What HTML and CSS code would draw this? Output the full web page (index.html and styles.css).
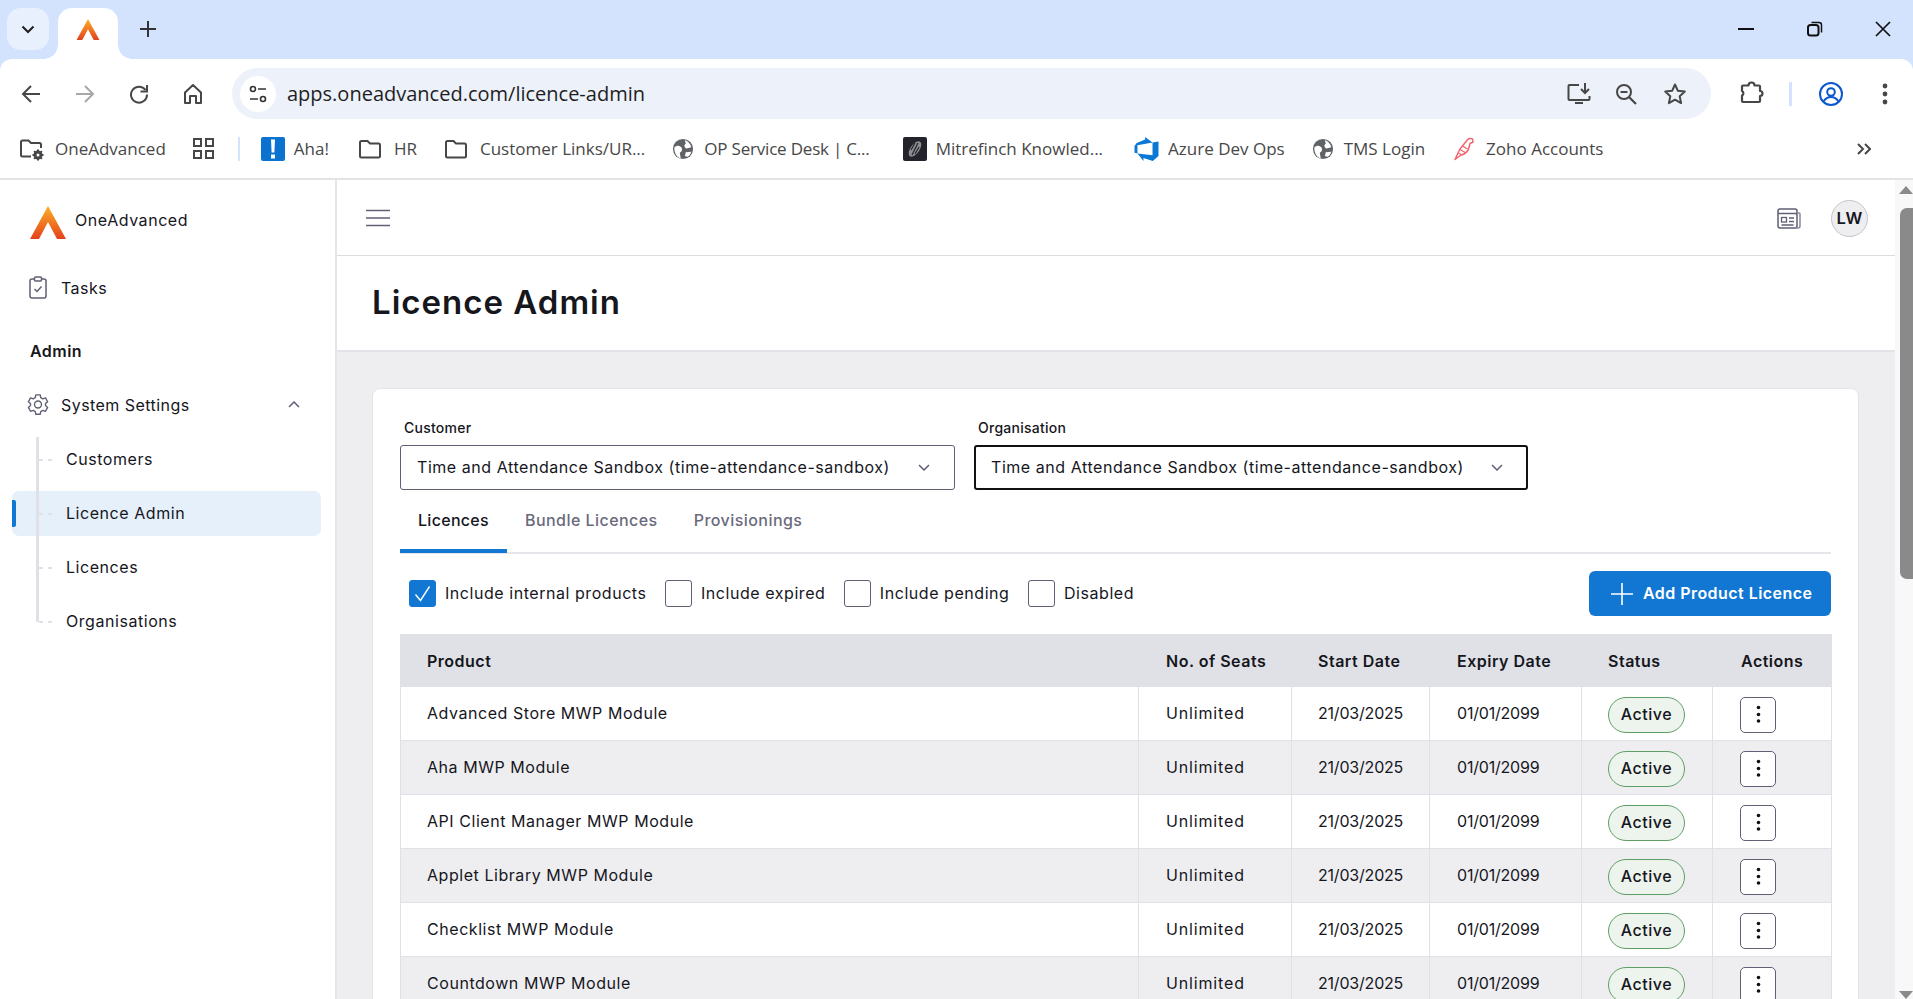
FILE: index.html
```html
<!DOCTYPE html>
<html lang="en">
<head>
    <meta charset="UTF-8">
    <meta name="viewport" content="width=device-width, initial-scale=1.0">
    <title>Licence Admin - OneAdvanced</title>
    <link rel="stylesheet" href="styles.css">
</head>
<body>
    <svg class="defs" width="0" height="0" aria-hidden="true">
        <defs>
            <linearGradient id="flame" x1="0" y1="0" x2="0" y2="1">
                <stop offset="0" stop-color="#fbb02a"/>
                <stop offset="1" stop-color="#e4421a"/>
            </linearGradient>
            <symbol id="folder" viewBox="0 0 24 24">
                <path d="M2 5.5A1.5 1.5 0 0 1 3.500 4h6l2.500 2.500h8.500A1.500 1.500 0 0 1 22 8v11a1.500 1.500 0 0 1-1.500 1.500h-17A1.500 1.500 0 0 1 2 19z" fill="none" stroke="#474747" stroke-width="2"/>
            </symbol>
            <symbol id="globe" viewBox="0 0 24 24">
                <circle cx="12" cy="12" r="11" fill="#5f6368"/>
                <path d="M2.500 10.500c2-2.500 5-2.500 7-1 2 1.500 1.500 3.500 1 5l-2 1.500 1 6C5 21 2.500 16 2.500 10.500zM14 2.500c3 .5 6 3.500 7 7.500l-5 1.500c-1.500 0-2.500-2-2.500-3.500l1.500-2zM15 15.500l6-.500c-.5 2.500-2 4.500-4 5.500l-3-1z" fill="#fff"/>
            </symbol>
            <symbol id="kebab" viewBox="0 0 36 36">
                <circle cx="18.500" cy="10.500" r="1.800" fill="#111"/>
                <circle cx="18.500" cy="17.500" r="1.800" fill="#111"/>
                <circle cx="18.500" cy="24" r="1.800" fill="#111"/>
            </symbol>
        </defs>
    </svg>

    <div class="tabstrip">
        <button class="tab-search">
            <svg width="14" height="9" viewBox="0 0 14 9"><path d="M1.500 1.500 7 7l5.500-5.500" fill="none" stroke="#1f1f1f" stroke-width="2"/></svg>
        </button>
        <div class="tab">
            <svg width="24" height="21" viewBox="0 0 36 33"><path d="M18 0 36 33h-9L18 16 9 33H0z" fill="url(#flame)"/></svg>
        </div>
        <svg class="new-tab" width="18" height="18" viewBox="0 0 18 18"><path d="M9 1v16M1 9h16" stroke="#333" stroke-width="2"/></svg>
        <div class="window-controls">
            <svg width="16" height="16" viewBox="0 0 16 16"><path d="M0 8h16" stroke="#111" stroke-width="2"/></svg>
            <svg width="16" height="16" viewBox="0 0 16 16"><rect x="1" y="4" width="10.500" height="10.500" rx="2.500" fill="none" stroke="#111" stroke-width="2"/><path d="M4.500 1.500H12a2.500 2.500 0 0 1 2.500 2.500v7.500" fill="none" stroke="#111" stroke-width="1.500"/></svg>
            <svg width="16" height="16" viewBox="0 0 16 16"><path d="M1 1l14 14M15 1 1 15" stroke="#111" stroke-width="1.700"/></svg>
        </div>
    </div>

    <div class="toolbar">
        <button class="tool-btn">
            <svg width="20" height="20" viewBox="0 0 20 20"><path d="M19 10H2M10 2l-8 8 8 8" fill="none" stroke="#474747" stroke-width="2"/></svg>
        </button>
        <button class="tool-btn">
            <svg width="20" height="20" viewBox="0 0 20 20"><path d="M1 10h17M10 2l8 8-8 8" fill="none" stroke="#a8a8a8" stroke-width="2"/></svg>
        </button>
        <button class="tool-btn">
            <svg width="20" height="20" viewBox="0 0 20 20"><path d="M16.500 6A8 8 0 1 0 18 10.500" fill="none" stroke="#474747" stroke-width="2"/><path d="M18 1v6.500h-6.500" fill="none" stroke="#474747" stroke-width="2"/></svg>
        </button>
        <button class="tool-btn">
            <svg width="20" height="22" viewBox="0 0 20 22"><path d="M2 9.500 10 2l8 7.500V20h-5v-7H7v7H2z" fill="none" stroke="#474747" stroke-width="2" stroke-linejoin="round"/></svg>
        </button>
        <div class="omnibox">
            <span class="site-info">
                <svg width="18" height="18" viewBox="0 0 18 18"><circle cx="4" cy="4" r="2.500" fill="none" stroke="#333" stroke-width="1.600"/><path d="M9 4h8M1 14h8" stroke="#333" stroke-width="1.600"/><circle cx="14" cy="14" r="2.500" fill="none" stroke="#333" stroke-width="1.600"/></svg>
            </span>
            <span class="url">apps.oneadvanced.com/licence-admin</span>
            <span class="omni-icons">
                <svg class="install" width="24" height="24" viewBox="0 0 24 24"><path d="M12 3H2.500a1 1 0 0 0-1 1v13a1 1 0 0 0 1 1h19a1 1 0 0 0 1-1v-3" fill="none" stroke="#474747" stroke-width="2"/><path d="M8 20h8v2H8z" fill="#474747"/><path d="M18 1v9M14 7l4 4 4-4" fill="none" stroke="#474747" stroke-width="2"/></svg>
                <svg width="22" height="22" viewBox="0 0 22 22"><circle cx="9" cy="9" r="7" fill="none" stroke="#474747" stroke-width="2"/><path d="M14 14l7 7" stroke="#474747" stroke-width="2.200"/><path d="M5.500 9h7" stroke="#474747" stroke-width="2"/></svg>
                <svg width="24" height="24" viewBox="0 0 24 24"><path d="M12 2.500l2.900 6.300 6.900.8-5.100 4.700 1.400 6.800-6.100-3.400-6.100 3.400 1.400-6.800-5.100-4.700 6.900-.8z" fill="none" stroke="#474747" stroke-width="2" stroke-linejoin="round"/></svg>
            </span>
        </div>
        <svg class="extensions" width="25" height="25" viewBox="0 0 25 25"><path d="M2 5.500a1 1 0 0 1 1-1h5.500a3 3 0 0 1 6 0H19a1 1 0 0 1 1 1V10a2.500 2.500 0 0 1 0 5v5a1 1 0 0 1-1 1H3a1 1 0 0 1-1-1v-5.500a2.500 2.500 0 0 0 0-4.500z" fill="none" stroke="#474747" stroke-width="2.200" stroke-linejoin="round"/></svg>
        <span class="tool-sep"></span>
        <svg class="profile" width="24" height="24" viewBox="0 0 24 24"><circle cx="12" cy="12" r="11" fill="none" stroke="#0b57d0" stroke-width="2"/><circle cx="12" cy="10" r="3.800" fill="none" stroke="#0b57d0" stroke-width="2"/><path d="M4.500 19.500c2-3.200 4.500-4.500 7.500-4.500s5.500 1.300 7.500 4.500" fill="none" stroke="#0b57d0" stroke-width="2"/></svg>
        <svg class="menu" width="6" height="22" viewBox="0 0 6 22"><circle cx="3" cy="3" r="2.400" fill="#474747"/><circle cx="3" cy="11" r="2.400" fill="#474747"/><circle cx="3" cy="19" r="2.400" fill="#474747"/></svg>
    </div>

    <div class="bookmarks">
        <a class="bookmark bm-managed">
            <svg width="26" height="24" viewBox="0 0 26 24"><path d="M12 19.500H3.500A1.500 1.500 0 0 1 2 18V5A1.500 1.500 0 0 1 3.500 3.500h6L12 6h8.500A1.500 1.500 0 0 1 22 7.500V11" fill="none" stroke="#474747" stroke-width="2"/><circle cx="19" cy="18" r="3" fill="none" stroke="#474747" stroke-width="3"/><path d="M19 12.500v11M13.500 18h11M15.100 14.100l7.800 7.800M15.100 21.900l7.800-7.800" stroke="#474747" stroke-width="2"/><circle cx="19" cy="18" r="1.500" fill="#fff"/></svg>
            <span>OneAdvanced</span>
        </a>
        <svg class="apps" width="21" height="21" viewBox="0 0 21 21"><path d="M1 1h7v7H1zM13 1h7v7h-7zM1 13h7v7H1zM13 13h7v7h-7z" fill="none" stroke="#474747" stroke-width="2"/></svg>
        <span class="bm-sep"></span>
        <a class="bookmark bm-aha">
            <svg width="24" height="24" viewBox="0 0 24 24"><rect width="24" height="24" rx="2" fill="#0b73cf"/><path d="M10 2.500h4l-.6 13h-2.800z" fill="#fff"/><rect x="10" y="17.500" width="4" height="4" fill="#fff"/></svg>
            <span>Aha!</span>
        </a>
        <a class="bookmark bm-folder bm-hr"><svg width="24" height="24"><use href="#folder"/></svg><span>HR</span></a>
        <a class="bookmark bm-folder bm-links"><svg width="24" height="24"><use href="#folder"/></svg><span>Customer Links/UR...</span></a>
        <a class="bookmark bm-desk"><svg width="22" height="22"><use href="#globe"/></svg><span>OP Service Desk | C...</span></a>
        <a class="bookmark bm-mitre">
            <svg width="24" height="24" viewBox="0 0 24 24"><rect width="24" height="24" rx="2" fill="#23232b"/><ellipse cx="12" cy="12" rx="4.500" ry="9" transform="rotate(35 12 12)" fill="#8d8d92"/><path d="M15 6l-6 12M12 6l-4 7M16 10l-4 7" stroke="#23232b" stroke-width="1.200"/></svg>
            <span>Mitrefinch Knowled...</span>
        </a>
        <a class="bookmark bm-azure">
            <svg width="25" height="24" viewBox="0 0 24 24"><path d="M0 8.877L2.247 5.910l8.405-3.416V.022l7.370 5.393L2.966 8.338v8.225L0 15.707zm24-4.450v14.651l-5.753 4.900-9.303-3.057v3.056l-5.978-7.416 15.057 1.798V5.415z" fill="#0a78d4"/></svg>
            <span>Azure Dev Ops</span>
        </a>
        <a class="bookmark bm-tms"><svg width="22" height="22"><use href="#globe"/></svg><span>TMS Login</span></a>
        <a class="bookmark bm-folder bm-zoho">
            <svg width="20" height="24" viewBox="0 0 20 24"><path d="M18.500 2c-2.500-1.500-5 0-6 2L6 12l-2 4-3 6.500 6-4.500c4-1 7-3.500 8-7.500l1-4 3-1.500z" fill="#fff" stroke="#f2666c" stroke-width="1.500" stroke-linejoin="round"/><path d="M6 12.500l6 3.500M8.500 9l5 3M4 16l4.500 2" stroke="#f2666c" stroke-width="1.300"/></svg>
            <span>Zoho Accounts</span>
        </a>
        <svg class="bm-more" width="14" height="12" viewBox="0 0 14 12"><path d="M1 1l5 5-5 5M8 1l5 5-5 5" fill="none" stroke="#474747" stroke-width="2"/></svg>
    </div>

    <div class="app">
        <aside class="sidebar">
            <div class="brand">
                <svg width="36" height="33" viewBox="0 0 36 33"><path d="M18 0 36 33h-9L18 16 9 33H0z" fill="url(#flame)"/></svg>
                <span>OneAdvanced</span>
            </div>
            <a class="nav-item nav-tasks">
                <svg width="18" height="23" viewBox="0 0 18 23"><rect x="1" y="3" width="16" height="19" rx="2" fill="none" stroke="#5f5f75" stroke-width="1.500"/><rect x="5.500" y="1" width="7" height="4" rx="1" fill="#fff" stroke="#5f5f75" stroke-width="1.500"/><path d="M5.500 13l2.500 2.500 4.500-5" fill="none" stroke="#5f5f75" stroke-width="1.500"/></svg>
                <span>Tasks</span>
            </a>
            <div class="nav-heading">Admin</div>
            <a class="nav-item nav-settings">
                <svg width="22" height="23" viewBox="0 0 24 24"><path d="M9.600 1.500h4.800l.6 3 2.200 1.300 3-1 2.300 4.200-2.300 2v2.200l2.300 2-2.300 4.200-3-1-2.200 1.300-.6 3H9.600l-.6-3-2.200-1.300-3 1-2.300-4.200 2.300-2v-2.200l-2.300-2 2.300-4.200 3 1L9 4.500z" fill="none" stroke="#5f5f75" stroke-width="1.500" stroke-linejoin="round"/><circle cx="12" cy="12" r="3.800" fill="none" stroke="#5f5f75" stroke-width="1.500"/></svg>
                <span>System Settings</span>
                <svg class="nav-chevron" width="12" height="7" viewBox="0 0 12 7"><path d="M1 6l5-5 5 5" fill="none" stroke="#5f5f75" stroke-width="1.500"/></svg>
            </a>
            <div class="subnav">
                <a class="sub-item">Customers</a>
                <a class="sub-item active">Licence Admin</a>
                <a class="sub-item">Licences</a>
                <a class="sub-item">Organisations</a>
            </div>
        </aside>

        <main class="main">
            <div class="topbar">
                <svg width="24" height="18" viewBox="0 0 24 18"><path d="M0 1.500h24M0 9h24M0 16.500h24" stroke="#5f5f75" stroke-width="1.600"/></svg>
                <div class="topbar-right">
                    <svg width="24" height="21" viewBox="0 0 24 21"><rect x="1" y="1" width="19" height="19" rx="2" fill="none" stroke="#5f5f75" stroke-width="1.500"/><path d="M20 5h2a1 1 0 0 1 1 1v12a2 2 0 0 1-2 2h-3" fill="none" stroke="#8a8a9c" stroke-width="1.500"/><path d="M1 5.500h19" stroke="#5f5f75" stroke-width="1.500"/><rect x="4.500" y="9.500" width="5" height="4.500" fill="none" stroke="#5f5f75" stroke-width="1.300"/><path d="M12 10h5M12 13.500h5M4.500 17h12" stroke="#5f5f75" stroke-width="1.300"/></svg>
                    <span class="avatar">LW</span>
                </div>
            </div>
            <div class="page-title">
                <h1>Licence Admin</h1>
            </div>
            <div class="page-body">
                <section class="card">
                    <div class="selects">
                        <div class="field">
                            <label>Customer</label>
                            <div class="select">
                                <span>Time and Attendance Sandbox (time-attendance-sandbox)</span>
                                <svg width="12" height="7" viewBox="0 0 12 7"><path d="M1 1l5 5 5-5" fill="none" stroke="#5f5f75" stroke-width="1.500"/></svg>
                            </div>
                        </div>
                        <div class="field">
                            <label>Organisation</label>
                            <div class="select focused">
                                <span>Time and Attendance Sandbox (time-attendance-sandbox)</span>
                                <svg width="12" height="7" viewBox="0 0 12 7"><path d="M1 1l5 5 5-5" fill="none" stroke="#5f5f75" stroke-width="1.500"/></svg>
                            </div>
                        </div>
                    </div>

                    <div class="tabs">
                        <a class="tab-link active">Licences</a>
                        <a class="tab-link">Bundle Licences</a>
                        <a class="tab-link">Provisionings</a>
                    </div>

                    <div class="filters">
                        <label class="check">
                            <span class="box checked">
                                <svg width="19" height="19" viewBox="0 0 19 19"><path d="M2.500 10.500l5 6 9-14" fill="none" stroke="#fff" stroke-width="1.400"/></svg>
                            </span>
                            <span class="check-text">Include internal products</span>
                        </label>
                        <label class="check"><span class="box"></span><span class="check-text">Include expired</span></label>
                        <label class="check"><span class="box"></span><span class="check-text">Include pending</span></label>
                        <label class="check"><span class="box"></span><span class="check-text">Disabled</span></label>
                        <button class="add-btn">
                            <svg width="22" height="22" viewBox="0 0 22 22"><path d="M11 0v22M0 11h22" stroke="#fff" stroke-width="1.600"/></svg>
                            Add Product Licence
                        </button>
                    </div>

                    <table class="licences">
                        <colgroup>
                            <col class="col-product">
                            <col class="col-seats">
                            <col class="col-start">
                            <col class="col-expiry">
                            <col class="col-status">
                            <col class="col-actions">
                        </colgroup>
                        <thead>
                            <tr>
                                <th>Product</th>
                                <th>No. of Seats</th>
                                <th>Start Date</th>
                                <th>Expiry Date</th>
                                <th>Status</th>
                                <th>Actions</th>
                            </tr>
                        </thead>
                        <tbody>
                            <tr>
                                <td>Advanced Store MWP Module</td>
                                <td>Unlimited</td>
                                <td>21/03/2025</td>
                                <td>01/01/2099</td>
                                <td><span class="badge">Active</span></td>
                                <td><button class="row-btn"><svg width="36" height="36"><use href="#kebab"/></svg></button></td>
                            </tr>
                            <tr>
                                <td>Aha MWP Module</td>
                                <td>Unlimited</td>
                                <td>21/03/2025</td>
                                <td>01/01/2099</td>
                                <td><span class="badge">Active</span></td>
                                <td><button class="row-btn"><svg width="36" height="36"><use href="#kebab"/></svg></button></td>
                            </tr>
                            <tr>
                                <td>API Client Manager MWP Module</td>
                                <td>Unlimited</td>
                                <td>21/03/2025</td>
                                <td>01/01/2099</td>
                                <td><span class="badge">Active</span></td>
                                <td><button class="row-btn"><svg width="36" height="36"><use href="#kebab"/></svg></button></td>
                            </tr>
                            <tr>
                                <td>Applet Library MWP Module</td>
                                <td>Unlimited</td>
                                <td>21/03/2025</td>
                                <td>01/01/2099</td>
                                <td><span class="badge">Active</span></td>
                                <td><button class="row-btn"><svg width="36" height="36"><use href="#kebab"/></svg></button></td>
                            </tr>
                            <tr>
                                <td>Checklist MWP Module</td>
                                <td>Unlimited</td>
                                <td>21/03/2025</td>
                                <td>01/01/2099</td>
                                <td><span class="badge">Active</span></td>
                                <td><button class="row-btn"><svg width="36" height="36"><use href="#kebab"/></svg></button></td>
                            </tr>
                            <tr>
                                <td>Countdown MWP Module</td>
                                <td>Unlimited</td>
                                <td>21/03/2025</td>
                                <td>01/01/2099</td>
                                <td><span class="badge">Active</span></td>
                                <td><button class="row-btn"><svg width="36" height="36"><use href="#kebab"/></svg></button></td>
                            </tr>
                        </tbody>
                    </table>
                </section>
            </div>
        </main>

        <div class="scrollbar">
            <svg width="14" height="8" viewBox="0 0 14 8"><path d="M7 0l7 8H0z" fill="#8a8a8a"/></svg>
            <div class="scroll-thumb"></div>
            <svg class="scroll-down" width="14" height="8" viewBox="0 0 14 8"><path d="M0 0h14L7 8z" fill="#8a8a8a"/></svg>
        </div>
    </div>
</body>
</html>
```

FILE: styles.css
```css
* {
    margin: 0;
    padding: 0;
    box-sizing: border-box;
}

html, body {
    height: 999px;
    overflow: hidden;
}

body {
    font-family: "Inter", sans-serif;
    color: #16161d;
    background: #fff;
}

.defs {
    position: absolute;
}

svg {
    display: block;
    flex-shrink: 0;
}

button {
    background: none;
    border: none;
    font-family: inherit;
}

/* Browser chrome */
.tabstrip {
    height: 71px;
    margin-bottom: -12px;
    background: #d3e3fd;
    display: flex;
    align-items: flex-start;
    padding: 8px 22px 0 7px;
}

.tab-search {
    width: 42px;
    height: 42px;
    background: #e9f0fd;
    border-radius: 14px;
    display: flex;
    align-items: center;
    justify-content: center;
}

.tab {
    position: relative;
    width: 60px;
    height: 51px;
    margin-left: 9px;
    background: #fff;
    border-radius: 14px 14px 0 0;
    display: flex;
    align-items: center;
    justify-content: center;
    padding-bottom: 9px;
}

.tab::before,
.tab::after {
    content: "";
    position: absolute;
    bottom: 0;
    width: 14px;
    height: 14px;
}

.tab::before {
    left: -14px;
    background: radial-gradient(circle at 0 0, transparent 13.500px, #fff 14px);
}

.tab::after {
    right: -14px;
    background: radial-gradient(circle at 100% 0, transparent 13.500px, #fff 14px);
}

.new-tab {
    margin: 12px 0 0 21px;
}

.window-controls {
    margin-left: auto;
    display: flex;
    gap: 53px;
    padding-top: 13px;
}

.window-controls svg:last-child {
    margin-left: -1px;
}

.toolbar {
    position: relative;
    height: 60px;
    background: #fff;
    border-radius: 12px 12px 0 0;
    display: flex;
    align-items: center;
    padding: 9px 0 0 4px;
}

.tool-btn {
    width: 54px;
    display: flex;
    justify-content: center;
}

.omnibox {
    width: 1479px;
    height: 51px;
    margin-left: 12px;
    background: #ecf1fa;
    border-radius: 26px;
    display: flex;
    align-items: center;
    padding: 0 24px 0 8px;
}

.site-info {
    width: 36px;
    height: 36px;
    background: #fff;
    border-radius: 50%;
    display: flex;
    align-items: center;
    justify-content: center;
}

.url {
    margin-left: 11px;
    font-family: "Open Sans", sans-serif;
    font-size: 20px;
    color: #1f1f1f;
}

.omni-icons {
    margin-left: auto;
    display: flex;
    align-items: center;
    gap: 26px;
}

.install {
    margin-right: -2px;
}

.extensions {
    margin-left: 29px;
}

.tool-sep {
    width: 3px;
    height: 24px;
    margin-left: 24px;
    background: #d3e3fd;
}

.profile {
    margin-left: 27px;
}

.menu {
    margin-left: 39px;
}

.bookmarks {
    height: 61px;
    border-bottom: 2px solid #e3e3e3;
    display: flex;
    align-items: center;
    padding-left: 19px;
    font-family: "Open Sans", sans-serif;
    font-size: 17px;
    color: #474747;
}

.bookmark {
    display: flex;
    align-items: center;
    gap: 10px;
    white-space: nowrap;
}

.bm-folder { gap: 12px; }

.apps { margin-left: 27px; }

.bm-sep {
    width: 2px;
    height: 24px;
    margin-left: 24px;
    background: #d3e3fd;
}

.bm-aha { margin-left: 21px; gap: 9px; }
.bm-hr { margin-left: 29px; }
.bm-links { margin-left: 27px; }
.bm-desk { margin-left: 27px; }
.bm-desk span { letter-spacing: -0.2px; }
.bm-mitre { margin-left: 33px; gap: 9px; }
.bm-azure { margin-left: 31px; gap: 9px; }
.bm-tms { margin-left: 27px; }
.bm-zoho { margin-left: 29px; }

.bm-more {
    margin-left: auto;
    margin-right: 42px;
}

/* App shell */
.app {
    height: 819px;
    display: flex;
}

.sidebar {
    width: 337px;
    flex-shrink: 0;
    border-right: 2px solid #e6e6ea;
    padding: 20px 14px 0 12px;
}

.brand {
    height: 40px;
    padding-left: 18px;
    margin-bottom: 26px;
    display: flex;
    align-items: center;
    gap: 9px;
    font-size: 16px;
    letter-spacing: 0.55px;
}

.brand svg {
    margin-top: 5px;
}

.nav-item {
    height: 45px;
    padding-bottom: 2px;
    display: flex;
    align-items: center;
    font-size: 16px;
    letter-spacing: 0.45px;
}

.nav-tasks {
    padding-left: 17px;
    gap: 14px;
}

.nav-settings {
    padding-left: 15px;
    gap: 12px;
    margin-bottom: 9px;
}

.nav-chevron {
    margin-left: auto;
    margin-right: 21px;
}

.nav-heading {
    height: 45px;
    margin: 18px 0 9px;
    padding-left: 18px;
    line-height: 45px;
    font-size: 16px;
    font-weight: 600;
    letter-spacing: 0.45px;
}

.subnav {
    position: relative;
}

.subnav::before {
    content: "";
    position: absolute;
    left: 24px;
    top: 0;
    width: 3px;
    height: 185px;
    background: #e0e1e6;
    z-index: 1;
}

.sub-item {
    position: relative;
    height: 45px;
    margin-bottom: 9px;
    padding: 0 0 2px 54px;
    display: flex;
    align-items: center;
    border-radius: 7px;
    font-size: 16px;
    letter-spacing: 0.55px;
}

.sub-item::before {
    content: "";
    position: absolute;
    left: 27px;
    top: 22px;
    width: 13px;
    height: 2px;
    background: repeating-linear-gradient(90deg, #e0e1e6 0 4px, transparent 4px 9px);
}

.sub-item.active {
    background: #e6f0fa;
}

.sub-item.active::after {
    content: "";
    position: absolute;
    left: 0;
    top: 9px;
    width: 4px;
    height: 27px;
    background: #1177d3;
    border-radius: 0 2px 2px 0;
}

.main {
    flex: 1;
    min-width: 0;
    display: flex;
    flex-direction: column;
}

.topbar {
    height: 76px;
    flex-shrink: 0;
    border-bottom: 1px solid #dcdce2;
    display: flex;
    align-items: center;
    justify-content: space-between;
    padding: 1px 27px 0 29px;
}

.topbar-right {
    display: flex;
    align-items: center;
    gap: 30px;
}

.avatar {
    width: 37px;
    height: 37px;
    border: 1px solid #c4c4cd;
    border-radius: 50%;
    background: #eeeef1;
    display: flex;
    align-items: center;
    justify-content: center;
    font-size: 16.500px;
    font-weight: 600;
}

.page-title {
    height: 96px;
    flex-shrink: 0;
    border-bottom: 2px solid #e3e3e7;
    padding: 0 0 3px 35px;
    display: flex;
    align-items: center;
}

h1 {
    font-size: 33px;
    font-weight: 600;
    letter-spacing: 1px;
}

.page-body {
    flex: 1;
    min-height: 0;
    overflow: hidden;
    background: #eeeef1;
    padding: 36px 36px 0 35px;
}

.card {
    background: #fff;
    border: 1px solid #e4e4e8;
    border-radius: 8px;
    padding: 30px 27px 20px;
}

/* Form */
.selects {
    display: flex;
    gap: 19px;
}

.field {
    width: 555px;
}

.field:last-child {
    width: 554px;
}

.field label {
    display: block;
    height: 18px;
    margin: 0 0 8px 4px;
    line-height: 18px;
    font-size: 14px;
    font-weight: 500;
    letter-spacing: 0.25px;
}

.select {
    height: 45px;
    border: 1px solid #5f5f75;
    border-radius: 3px;
    display: flex;
    align-items: center;
    justify-content: space-between;
    padding: 0 24px 2px 16px;
    font-size: 16px;
    letter-spacing: 0.55px;
    white-space: nowrap;
}

.select svg {
    margin-top: 2px;
}

.select.focused {
    border: 2px solid #111;
    padding: 0 23px 2px 15px;
}

.tabs {
    display: flex;
    margin-top: 9px;
    border-bottom: 2px solid #e6e6ea;
}

.tab-link {
    padding: 10px 18px 18px;
    line-height: 22px;
    font-size: 16px;
    font-weight: 500;
    letter-spacing: 0.45px;
    color: #6a6a7c;
    border-bottom: 4px solid transparent;
    margin-bottom: -1px;
}

.tab-link.active {
    color: #16161d;
    letter-spacing: 0.3px;
    border-bottom-color: #1177d3;
}

.filters {
    display: flex;
    align-items: center;
    margin-top: 17px;
    padding-left: 9px;
    gap: 18.500px;
    font-size: 16px;
    letter-spacing: 0.55px;
}

.check {
    display: flex;
    align-items: center;
    gap: 9px;
}

.check-text {
    margin-bottom: 2px;
}

.box {
    width: 27px;
    height: 27px;
    border: 1px solid #5f5f75;
    border-radius: 3px;
    display: flex;
    align-items: center;
    justify-content: center;
}

.box.checked {
    background: #1177d3;
    border-color: #1177d3;
}

.add-btn {
    margin-left: auto;
    height: 45px;
    width: 242px;
    background: #1177d3;
    border-radius: 6px;
    display: flex;
    align-items: center;
    gap: 10px;
    padding: 0 0 2px 22px;
    color: #fff;
    font-size: 16px;
    font-weight: 600;
    letter-spacing: 0.45px;
}

.add-btn svg {
    margin-top: 2px;
}

/* Table */
.licences {
    width: 1431px;
    margin-top: 18px;
    border-collapse: collapse;
    table-layout: fixed;
    font-size: 16px;
    letter-spacing: 0.55px;
}

.col-product { width: 738px; }
.col-seats { width: 153px; }
.col-start { width: 138px; }
.col-expiry { width: 152px; }
.col-status { width: 131px; }
.col-actions { width: 119px; }

.licences th,
.licences td {
    height: 54px;
    padding: 0 26px;
    text-align: left;
    white-space: nowrap;
    border: 1px solid #e0e1e6;
}

.licences th {
    height: 52px;
    background: #e0e1e6;
    font-weight: 600;
    letter-spacing: 0.5px;
}

.licences th:nth-child(2),
.licences td:nth-child(2) {
    padding-left: 27px;
}

.licences th:nth-child(4),
.licences td:nth-child(4) {
    padding-left: 27px;
}

.licences th:last-child {
    padding-left: 28px;
}

.licences td:nth-child(-n+4) {
    padding-bottom: 2px;
}

.licences td:nth-child(2) {
    letter-spacing: 0.85px;
}

.licences td:nth-child(3),
.licences td:nth-child(4) {
    letter-spacing: -0.2px;
}

.licences tbody tr:nth-child(even) {
    background: #eeeef1;
}

.badge {
    display: inline-flex;
    align-items: center;
    justify-content: center;
    width: 77px;
    height: 36px;
    margin-top: 3px;
    padding-bottom: 2px;
    vertical-align: middle;
    border: 1px solid #5f9e64;
    border-radius: 18px;
    background: #edf3ed;
    font-weight: 500;
    letter-spacing: 0.55px;
}

.row-btn {
    display: block;
    width: 36px;
    height: 36px;
    margin: 3px 0 0 1px;
    background: #fff;
    border: 1px solid #5f5f75;
    border-radius: 5px;
    position: relative;
}

.row-btn svg {
    position: absolute;
    left: -1px;
    top: -1px;
}

/* Page scrollbar */
.scrollbar {
    width: 18px;
    flex-shrink: 0;
    background: #f8f8f8;
    display: flex;
    flex-direction: column;
    align-items: flex-end;
    padding-top: 6px;
}

.scroll-thumb {
    width: 13px;
    height: 371px;
    margin-top: 14px;
    background: #8a8a8a;
    border-radius: 7px 0 0 7px;
}

.scroll-down {
    margin-top: auto;
}
```
